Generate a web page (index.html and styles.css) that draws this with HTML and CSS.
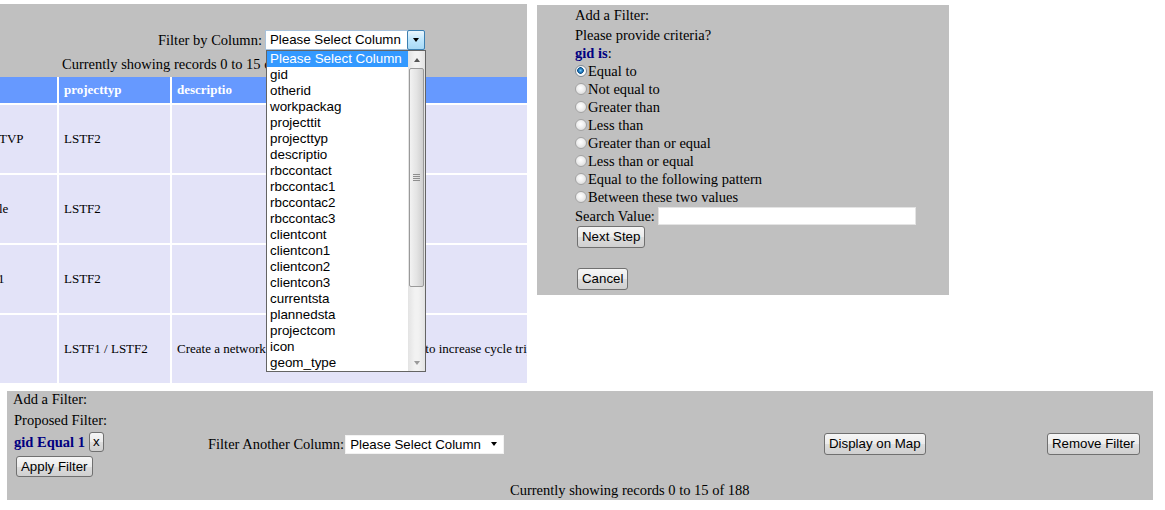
FILE: index.html
```html
<!DOCTYPE html>
<html>
<head>
<meta charset="utf-8">
<title>Filter</title>
<link rel="stylesheet" href="styles.css">
</head>
<body>
<div class="top">
  <div class="grid-panel">
    <div class="grid-head">
      <div class="filter-row">
        <span class="filter-label">Filter by Column:</span>
        <div class="select focus">
          <span class="select-text">Please Select Column</span>
          <span class="select-btn"><span class="tri-down dark"></span></span>
        </div>
      </div>
      <div class="count">Currently showing records 0 to 15 of 188</div>
    </div>
    <table class="records">
      <colgroup><col class="c1"><col class="c2"><col class="c3"></colgroup>
      <thead>
        <tr><th></th><th>projecttyp</th><th>descriptio</th></tr>
      </thead>
      <tbody>
        <tr><td class="cut"><span class="i1">TVP</span></td><td>LSTF2</td><td></td></tr>
        <tr><td class="cut"><span class="i2">le</span></td><td>LSTF2</td><td></td></tr>
        <tr><td class="cut"><span class="i3">1</span></td><td>LSTF2</td><td></td></tr>
        <tr><td class="cut"></td><td>LSTF1 / LSTF2</td><td>Create a network of high quality cycling routes to increase cycle trips</td></tr>
      </tbody>
    </table>
    <div class="listbox">
      <div class="options">
        <div class="opt sel">Please Select Column</div>
        <div class="opt">gid</div>
        <div class="opt">otherid</div>
        <div class="opt">workpackag</div>
        <div class="opt">projecttit</div>
        <div class="opt">projecttyp</div>
        <div class="opt">descriptio</div>
        <div class="opt">rbccontact</div>
        <div class="opt">rbccontac1</div>
        <div class="opt">rbccontac2</div>
        <div class="opt">rbccontac3</div>
        <div class="opt">clientcont</div>
        <div class="opt">clientcon1</div>
        <div class="opt">clientcon2</div>
        <div class="opt">clientcon3</div>
        <div class="opt">currentsta</div>
        <div class="opt">plannedsta</div>
        <div class="opt">projectcom</div>
        <div class="opt">icon</div>
        <div class="opt">geom_type</div>
      </div>
      <div class="scrollbar">
        <div class="sb-btn"><span class="tri-up"></span></div>
        <div class="sb-track">
          <div class="sb-thumb"><span class="grip"></span></div>
        </div>
        <div class="sb-btn"><span class="tri-down"></span></div>
      </div>
    </div>
  </div>

  <div class="criteria">
    <div class="line">Add a Filter:</div>
    <div class="line gap2">Please provide criteria?</div>
    <div class="line"><b class="navy">gid is</b>:</div>
    <label class="radio-row"><input type="radio" name="op" class="radio" checked>Equal to</label>
    <label class="radio-row"><input type="radio" name="op" class="radio">Not equal to</label>
    <label class="radio-row"><input type="radio" name="op" class="radio">Greater than</label>
    <label class="radio-row"><input type="radio" name="op" class="radio">Less than</label>
    <label class="radio-row"><input type="radio" name="op" class="radio">Greater than or equal</label>
    <label class="radio-row"><input type="radio" name="op" class="radio">Less than or equal</label>
    <label class="radio-row"><input type="radio" name="op" class="radio">Equal to the following pattern</label>
    <label class="radio-row"><input type="radio" name="op" class="radio">Between these two values</label>
    <div class="search-row"><span>Search Value:</span><input type="text" class="search-input"></div>
    <div><button class="btn shift">Next Step</button></div>
    <div class="spacer"></div>
    <div><button class="btn shift">Cancel</button></div>
  </div>
</div>

<div class="bottom">
  <div class="b-title">Add a Filter:</div>
  <div class="b-main">
    <div class="b-left">
      <div class="proposed">Proposed Filter:</div>
      <div class="rule"><b class="navy">gid Equal 1</b><button class="btn btn-x">x</button></div>
      <button class="btn shift apply">Apply Filter</button>
    </div>
    <div class="another">
      <span>Filter Another Column:</span>
      <div class="select plain">
        <span class="select-text">Please Select Column</span>
        <span class="plain-arrow"><span class="tri-down dark"></span></span>
      </div>
    </div>
    <div><button class="btn">Display on Map</button></div>
    <div><button class="btn">Remove Filter</button></div>
  </div>
  <div class="b-count">Currently showing records 0 to 15 of 188</div>
</div>
</body>
</html>
```

FILE: styles.css
```css
* { box-sizing: border-box; }

body {
  margin: 0;
  background: #ffffff;
  color: #000000;
  font-family: "Liberation Serif", "Times New Roman", serif;
  font-size: 14.5px;
}

.navy { color: #000080; font-weight: bold; }

/* ---------- top area ---------- */
.top {
  display: flex;
  align-items: flex-start;
  padding-top: 4px;
}

.grid-panel {
  position: relative;
  width: 527px;
  flex: none;
  overflow: hidden;
}

.grid-head {
  background: #c0c0c0;
  height: 73px;
  padding-top: 26px;
}

.filter-row {
  display: flex;
  align-items: center;
  height: 20px;
  padding-left: 158px;
  line-height: 18px;
  white-space: nowrap;
}

.filter-label { width: 107px; flex: none; }

.count {
  margin-top: 5px;
  line-height: 18px;
  padding-left: 62px;
  white-space: nowrap;
}

/* fake selects */
.select {
  display: flex;
  align-items: stretch;
  width: 160px;
  height: 20px;
  background: #ffffff;
  font: 13.3px/18px "Liberation Sans", Arial, sans-serif;
  color: #000000;
  flex: none;
}

.select.focus { border: 1px solid #a9c2da; }

.select-text {
  flex: 1;
  padding-left: 4px;
  white-space: nowrap;
  overflow: hidden;
}

.select-btn {
  width: 18px;
  display: flex;
  align-items: center;
  justify-content: center;
  border: 1px solid #3c7fb1;
  border-radius: 2px;
  background: linear-gradient(#eaf6fd, #bee6fd 50%, #a7d9f5);
  margin: -1px -1px -1px 0;
}

.select.plain {
  width: 159px;
  height: 19px;
  margin-left: 1px;
  border: 1px solid #f2f2f2;
}

.plain-arrow {
  width: 18px;
  display: flex;
  align-items: center;
  justify-content: center;
}

.tri-down {
  width: 0;
  height: 0;
  border-left: 3.5px solid transparent;
  border-right: 3.5px solid transparent;
  border-top: 4px solid #9a9a9a;
}

.tri-down.dark { border-top-color: #000000; }

.tri-up {
  width: 0;
  height: 0;
  border-left: 3.5px solid transparent;
  border-right: 3.5px solid transparent;
  border-bottom: 4px solid #555555;
}

/* records table */
.records {
  border-collapse: separate;
  border-spacing: 2px;
  margin: -2px 0 0 -2px;
  table-layout: fixed;
  width: 696px;
  font-size: 13px;
}

.records col.c1 { width: 57px; }
.records col.c2 { width: 111px; }
.records col.c3 { width: 520px; }

.records th,
.records td {
  padding: 0 5px;
  text-align: left;
  white-space: nowrap;
  overflow: hidden;
  vertical-align: middle;
}

.records th {
  background: #6699ff;
  color: #ffffff;
  font-weight: bold;
  height: 26px;
}

.records td {
  background: #e3e3f8;
  height: 68px;
}

.records td.cut { padding-left: 0; }
.i1 { margin-left: -1px; }
.i2 { margin-left: -1px; }
.i3 { margin-left: -2px; }

/* open dropdown list */
.listbox {
  position: absolute;
  left: 266px;
  top: 46px;
  width: 160px;
  height: 322px;
  display: flex;
  background: #ffffff;
  border: 1px solid #646464;
  font: 13.4px/16px "Liberation Sans", Arial, sans-serif;
  color: #000000;
}

.options { width: 141px; flex: none; }

.opt {
  height: 16px;
  padding-left: 3px;
  white-space: nowrap;
}

.opt.sel { background: #3399ff; color: #ffffff; }

.scrollbar {
  width: 17px;
  flex: none;
  display: flex;
  flex-direction: column;
  background: linear-gradient(90deg, #e3e3e3, #f2f2f2 40%, #f2f2f2 60%, #e3e3e3);
}

.sb-btn {
  height: 17px;
  display: flex;
  align-items: center;
  justify-content: center;
}

.sb-track { flex: 1; }

.sb-thumb {
  height: 219px;
  margin: 0 1px;
  border: 1px solid #9a9a9a;
  border-radius: 2px;
  background: linear-gradient(90deg, #f2f2f2, #e4e4e4 50%, #cfcfcf);
  display: flex;
  align-items: center;
  justify-content: center;
}

.grip {
  width: 7px;
  height: 7px;
  background: repeating-linear-gradient(#8e8e8e 0 1px, transparent 1px 2px);
}

/* criteria panel */
.criteria {
  flex: none;
  width: 412px;
  height: 290px;
  margin: 1px 0 0 10px;
  padding: 1px 0 0 38px;
  background: #c0c0c0;
  line-height: 18px;
}

.line { height: 18px; white-space: nowrap; }
.gap2 { margin-top: 2px; }

.radio-row {
  display: flex;
  align-items: center;
  height: 18px;
  white-space: nowrap;
}

.radio {
  appearance: none;
  -webkit-appearance: none;
  width: 12px;
  height: 12px;
  margin: 0 1px 0 0;
  border-radius: 50%;
  border: 1px solid #a3a3a3;
  background: radial-gradient(circle at 45% 40%, #ffffff 0, #f0f0f0 40%, #d2d2d2 100%);
  flex: none;
}

.radio:checked {
  border-color: #7f8b96;
  background: radial-gradient(circle at 45% 45%, #7ccaf5 0, #2b8ad0 1.5px, #0e4f87 3px, #f4f4f4 3.6px, #ffffff 100%);
}

.search-row {
  display: flex;
  align-items: center;
  height: 20px;
  white-space: nowrap;
}

.search-input {
  width: 258px;
  height: 18px;
  margin-left: 3px;
  border: 1px solid #e4e4e4;
  background: #ffffff;
  padding: 0;
}

.btn {
  font: 13.3px/18px "Liberation Sans", Arial, sans-serif;
  color: #000000;
  height: 22px;
  padding: 0 4px;
  margin: 0;
  border: 1px solid #707070;
  border-radius: 3px;
  background: linear-gradient(#f6f6f6, #ebebeb 50%, #dddddd 51%, #cfcfcf);
  white-space: nowrap;
}

.btn.shift { margin-left: 2px; }

.spacer { height: 20px; }

/* bottom panel */
.bottom {
  width: 1146px;
  height: 109px;
  margin: 6px 0 0 7px;
  background: #c0c0c0;
}

.b-title { line-height: 16px; padding-left: 6px; }

.b-main {
  display: grid;
  grid-template-columns: 201px 616px 223px auto;
  align-items: center;
  margin-top: 4px;
}

.b-left { padding-left: 7px; }

.proposed { line-height: 18px; white-space: nowrap; }

.rule {
  display: flex;
  align-items: center;
  height: 20px;
  margin-top: 3px;
  white-space: nowrap;
}

.rule .navy { margin-right: 4px; }

.btn-x {
  height: 20px;
  width: 15px;
  padding: 0;
  text-align: center;
}

.apply { display: block; margin-top: 4px; height: 21px; line-height: 17px; }

.another {
  display: flex;
  align-items: center;
  white-space: nowrap;
}

.b-count {
  margin-top: 4px;
  line-height: 18px;
  padding-left: 503px;
  white-space: nowrap;
}
```
